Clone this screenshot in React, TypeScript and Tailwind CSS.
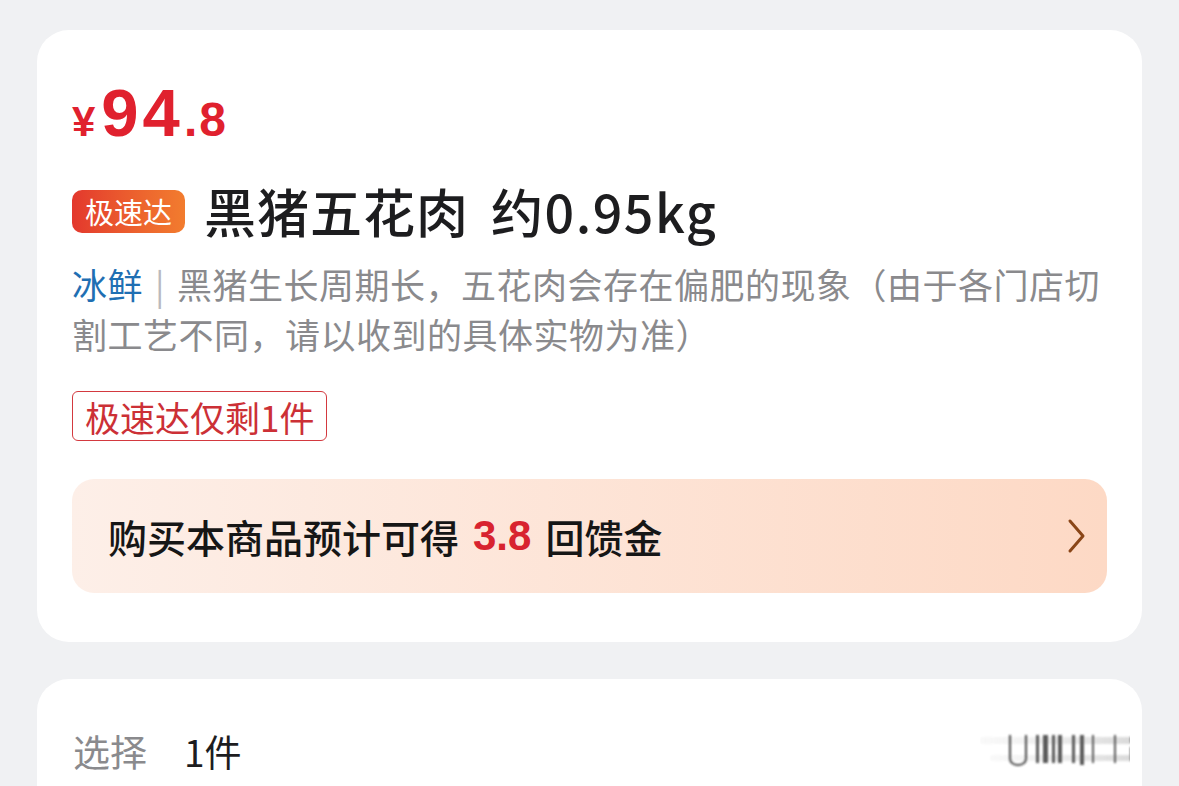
const cjk = { fontFamily: '"Noto Sans CJK SC", "Noto Sans", sans-serif' };

function Price() {
  return (
    <div
      className="flex items-baseline text-[#e0212e] font-bold leading-none"
      style={{ fontFamily: '"Liberation Sans", Arial, sans-serif' }}
    >
      <span className="text-[42px] mr-[6px]">¥</span>
      <span className="text-[67px] tracking-[4px]">94</span>
      <span className="text-[48px] tracking-[2px]">.8</span>
    </div>
  );
}

function Watermark() {
  // blurred overlay smudge at the right edge of the second card
  return (
    <svg width="150" height="40" viewBox="0 0 150 40" className="opacity-80">
      <defs>
        <filter id="b" x="-20%" y="-20%" width="140%" height="140%">
          <feGaussianBlur stdDeviation="1.2" />
        </filter>
        <linearGradient id="g" x1="0" y1="0" x2="1" y2="0">
          <stop offset="0" stopColor="#d9d9d9" stopOpacity="0.2" />
          <stop offset="1" stopColor="#bdbdbd" stopOpacity="0.7" />
        </linearGradient>
      </defs>
      <rect x="0" y="6" width="150" height="7" fill="url(#g)" filter="url(#b)" />
      <rect x="10" y="24" width="140" height="6" fill="url(#g)" filter="url(#b)" />
      <g filter="url(#b)" fill="#333">
        <path d="M30 4 v24 a8 6 0 0 0 16 0 v-24" fill="none" stroke="#222" strokeWidth="2" />
        <rect x="56" y="4" width="3" height="28" />
        <rect x="63" y="4" width="5" height="28" />
        <rect x="72" y="4" width="3" height="28" />
        <rect x="78" y="4" width="4" height="28" />
        <rect x="92" y="4" width="3" height="28" />
        <rect x="100" y="4" width="4" height="30" />
        <rect x="112" y="4" width="2" height="28" />
        <rect x="134" y="4" width="2" height="28" />
        <rect x="150" y="6" width="2" height="6" />
        <rect x="150" y="16" width="3" height="14" />
      </g>
    </svg>
  );
}

export default function App() {
  return (
    <div className="w-[1179px] h-[786px] overflow-hidden bg-[#f0f1f3] px-[37px] pt-[30px]" style={cjk}>
      <div className="bg-white rounded-[32px] px-[35px] pt-[49px] pb-[49px]">
        <Price />

        <div className="mt-[41px] h-12 flex items-center">
          <span className="h-[43px] px-[13px] flex items-center rounded-[10px] bg-gradient-to-r from-[#e3372d] to-[#f27c2e] text-white text-[29px] leading-none">
            极速达
          </span>
          <span className="ml-[19px] text-[52px] tracking-[1px] leading-none text-[#1d1d1f] font-medium">
            黑猪五花肉
          </span>
          <span className="ml-[22px] text-[52px] tracking-[1.5px] leading-none text-[#1d1d1f] font-medium">
            约0.95kg
          </span>
        </div>

        <p className="mt-[24px] text-[35px] leading-[50px] tracking-[0.5px] text-[#8a8a8d] whitespace-nowrap">
          <span className="text-[#1f6fb3]">冰鲜</span>
          <span className="text-[#b9b9bd] mx-[12px]">|</span>
          黑猪生长周期长，五花肉会存在偏肥的现象（由于各门店切
          <br />
          割工艺不同，请以收到的具体实物为准）
        </p>

        <div className="mt-[32px]">
          <span className="inline-flex items-center h-[50px] px-[12px] border-[1.5px] border-[#d3393f] rounded-[6px] text-[35px] leading-none text-[#cc3036]">
            极速达仅剩1件
          </span>
        </div>

        <div className="mt-[38px] h-[114px] rounded-[22px] bg-gradient-to-r from-[#fdefe8] to-[#fdd9c5] flex items-center justify-between pl-[36px] pr-[20px]">
          <div className="flex items-center text-[39px] font-medium text-[#161616] leading-none">
            <span>购买本商品预计可得</span>
            <span
              className="mx-[14px] text-[#d8232f] font-bold text-[42px]"
              style={{ fontFamily: '"Liberation Sans", Arial, sans-serif' }}
            >
              3.8
            </span>
            <span>回馈金</span>
          </div>
          <svg width="20" height="36" viewBox="0 0 20 36" fill="none">
            <path d="M3 3 L16 18 L3 33" stroke="#8a4618" strokeWidth="3" strokeLinecap="round" strokeLinejoin="round" />
          </svg>
        </div>
      </div>

      <div className="mt-[37px] bg-white rounded-t-[32px] h-[200px] px-[36px] pt-[52px]">
        <div className="flex items-center justify-between">
          <div className="flex items-center text-[37px] leading-none">
            <span className="text-[#8a8a8d]">选择</span>
            <span className="ml-[37px] text-[#1d1d1f]">1件</span>
          </div>
          <div className="mr-[-24px]">
            <Watermark />
          </div>
        </div>
      </div>
    </div>
  );
}
